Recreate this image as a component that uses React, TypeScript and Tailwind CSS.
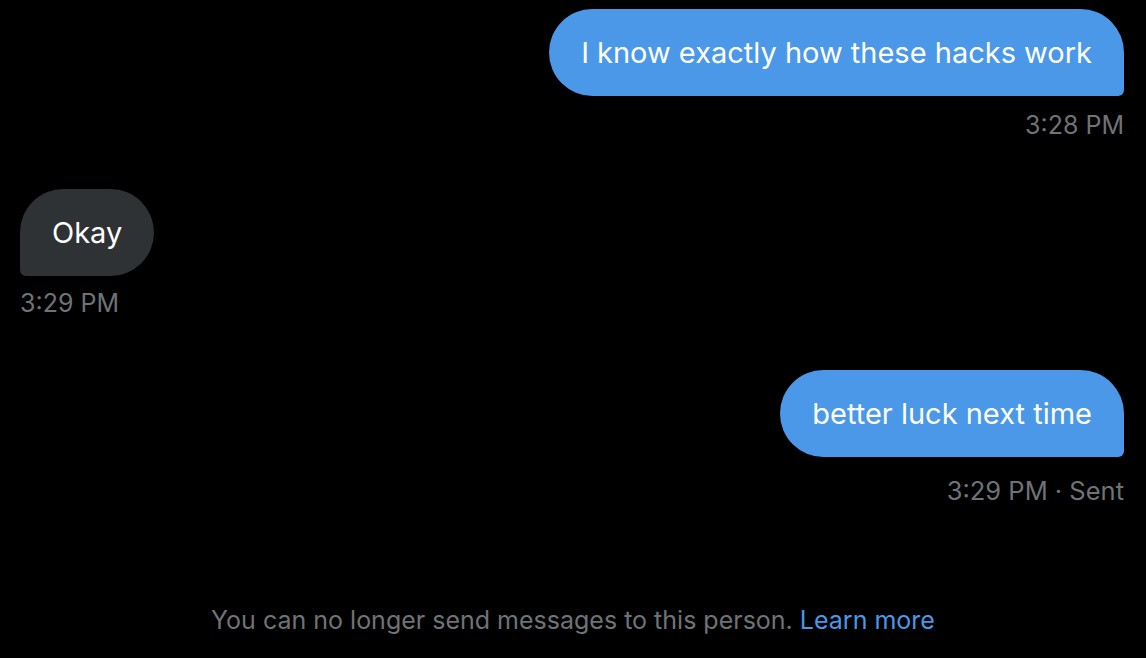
import React from "react";

const font = { fontFamily: "Inter, 'Noto Sans', sans-serif" };

export default function App() {
  return (
    <div className="w-[1146px] h-[658px] bg-black flex flex-col overflow-hidden" style={font}>
      <div className="flex flex-col px-[22px] pt-[9px] flex-1">
        <div className="flex flex-col items-end">
          <div className="bg-[#4a98e7] text-white text-[29px] leading-[87px] h-[87px] px-[32px] rounded-[44px] rounded-br-[6px]">
            I know exactly how these hacks work
          </div>
          <div className="text-[#6f7377] text-[25px] leading-[28px] mt-[15px]">3:28 PM</div>
        </div>
        <div className="flex flex-col items-start mt-[50px] -ml-[2px]">
          <div className="bg-[#2f3235] text-white text-[29px] leading-[87px] h-[87px] px-[32px] rounded-[44px] rounded-bl-[6px]">
            Okay
          </div>
          <div className="text-[#6f7377] text-[25px] leading-[28px] mt-[13px]">3:29 PM</div>
        </div>
        <div className="flex flex-col items-end mt-[53px]">
          <div className="bg-[#4a98e7] text-white text-[29px] leading-[87px] h-[87px] px-[32px] rounded-[44px] rounded-br-[6px]">
            better luck next time
          </div>
          <div className="text-[#6f7377] text-[25.5px] leading-[28px] mt-[20px]">3:29 PM · Sent</div>
        </div>
      </div>
      <div className="text-center text-[25px] leading-[30px] pb-[23px] text-[#6f7377]">
        You can no longer send messages to this person.{" "}
        <span className="text-[#4a98e7]">Learn more</span>
      </div>
    </div>
  );
}
